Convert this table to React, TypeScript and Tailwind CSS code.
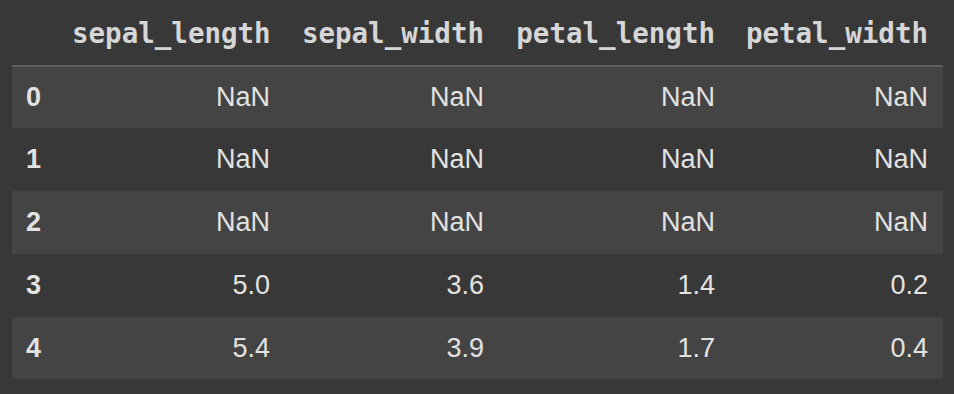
const columns = ["sepal_length", "sepal_width", "petal_length", "petal_width"];
const widths = ["w-[228px]", "w-[214px]", "w-[231px]", "w-[213px]"];
const heights = ["h-[62px]", "h-[63px]", "h-[63px]", "h-[63px]", "h-[62px]"];

const rows: string[][] = [
  ["NaN", "NaN", "NaN", "NaN"],
  ["NaN", "NaN", "NaN", "NaN"],
  ["NaN", "NaN", "NaN", "NaN"],
  ["5.0", "3.6", "1.4", "0.2"],
  ["5.4", "3.9", "1.7", "0.4"],
];

export default function App() {
  return (
    <div className="w-[954px] h-[394px] bg-[#383838] overflow-hidden">
      <table className="ml-[12px] w-[931px] table-fixed border-collapse">
        <thead>
          <tr className="h-[66px] border-b-2 border-[#5f5f5f]">
            <th className="w-[45px]" />
            {columns.map((c, i) => (
              <th
                key={c}
                className={`${widths[i]} px-[15px] pt-[2px] text-right text-[27.5px] font-bold text-[#d6d6d6] font-['DejaVu_Sans_Mono',monospace] whitespace-nowrap`}
              >
                {c}
              </th>
            ))}
          </tr>
        </thead>
        <tbody>
          {rows.map((r, idx) => (
            <tr key={idx} className={`${heights[idx]} ${idx % 2 === 0 ? "bg-[#444444]" : ""}`}>
              <th className="p-0 pl-[14px] text-left text-[27px] font-bold text-[#e2e2e2] font-['Liberation_Sans',Arial,sans-serif]">
                {idx}
              </th>
              {r.map((v, j) => (
                <td
                  key={j}
                  className="py-0 px-[15px] text-right text-[27px] text-[#e2e2e2] font-['Liberation_Sans',Arial,sans-serif]"
                >
                  {v}
                </td>
              ))}
            </tr>
          ))}
        </tbody>
      </table>
    </div>
  );
}
